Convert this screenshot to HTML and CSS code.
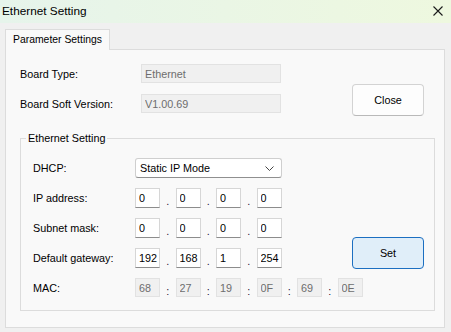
FILE: index.html
```html
<!DOCTYPE html>
<html>
<head>
    <link rel="stylesheet" href="styles.css">
</head>
<body>
<div class="window">
    <div class="titlebar">
        <span class="title">Ethernet Setting</span>
        <svg class="close-x" width="10" height="10" viewBox="0 0 10 10">
            <path d="M0.5 0.5 L9.5 9.5 M9.5 0.5 L0.5 9.5" stroke="#1a1a1a" stroke-width="1.1" fill="none"/>
        </svg>
    </div>

    <div class="tabs">
        <div class="tab">Parameter Settings</div>
    </div>

    <div class="panel">
        <div class="board">
            <div class="board-fields">
                <div class="board-row">
                    <span class="label">Board Type:</span>
                    <input class="box readonly board-input" type="text" value="Ethernet" readonly>
                </div>
                <div class="board-row">
                    <span class="label">Board Soft Version:</span>
                    <input class="box readonly board-input" type="text" value="V1.00.69" readonly>
                </div>
            </div>
            <button class="btn close-btn">Close</button>
        </div>

        <fieldset class="group">
            <legend>Ethernet Setting</legend>
            <div class="group-grid">
                <span class="label">DHCP:</span>
                <div class="select">
                    <span>Static IP Mode</span>
                    <svg width="9" height="5" viewBox="0 0 9 5">
                        <path d="M0.5 0.5 L4.5 4.5 L8.5 0.5" stroke="#444" stroke-width="1" fill="none"/>
                    </svg>
                </div>
                <span></span>

                <span class="label">IP address:</span>
                <div class="fields">
                    <input class="box" type="text" value="0"><span class="sep">.</span>
                    <input class="box" type="text" value="0"><span class="sep">.</span>
                    <input class="box" type="text" value="0"><span class="sep">.</span>
                    <input class="box" type="text" value="0">
                </div>
                <span></span>

                <span class="label">Subnet mask:</span>
                <div class="fields">
                    <input class="box" type="text" value="0"><span class="sep">.</span>
                    <input class="box" type="text" value="0"><span class="sep">.</span>
                    <input class="box" type="text" value="0"><span class="sep">.</span>
                    <input class="box" type="text" value="0">
                </div>
                <button class="btn set-btn">Set</button>

                <span class="label">Default gateway:</span>
                <div class="fields">
                    <input class="box" type="text" value="192"><span class="sep">.</span>
                    <input class="box" type="text" value="168"><span class="sep">.</span>
                    <input class="box" type="text" value="1"><span class="sep">.</span>
                    <input class="box" type="text" value="254">
                </div>

                <span class="label">MAC:</span>
                <div class="fields mac">
                    <input class="box readonly" type="text" value="68" readonly><span class="sep">:</span>
                    <input class="box readonly" type="text" value="27" readonly><span class="sep">:</span>
                    <input class="box readonly" type="text" value="19" readonly><span class="sep">:</span>
                    <input class="box readonly" type="text" value="0F" readonly><span class="sep">:</span>
                    <input class="box readonly" type="text" value="69" readonly><span class="sep">:</span>
                    <input class="box readonly" type="text" value="0E" readonly>
                </div>
            </div>
        </fieldset>
    </div>
</div>
</body>
</html>
```

FILE: styles.css
```css
body {
    margin: 0;
    padding: 0;
    background-color: #f0f0f0;
    font-family: "Liberation Sans", Arial, sans-serif;
    font-size: 10.8px;
    color: #000;
}

.window {
    width: 451px;
    height: 332px;
    overflow: hidden;
}

.titlebar {
    height: 23px;
    display: flex;
    align-items: center;
    justify-content: space-between;
    padding: 0 8px 0 2px;
    background: linear-gradient(to right, #e6f4eb, #eef8df);
}

.title {
    font-size: 11.8px;
    margin-top: -1px;
}

.close-x {
    margin-top: -2px;
}

.tabs {
    display: flex;
    padding: 6px 0 0 5px;
}

.tab {
    width: 96px;
    height: 20px;
    line-height: 19px;
    padding: 0 0 0 7px;
    background-color: #f9f9f9;
    border: 1px solid #dcdcdc;
    border-bottom: none;
    margin-bottom: -1px;
    position: relative;
    font-size: 10.4px;
}

.panel {
    margin-left: 5px;
    background-color: #f9f9f9;
    border: 1px solid #dcdcdc;
    padding: 14px 9px 0 14px;
    width: 415px;
    height: 263px;
}

.label {
    display: flex;
    align-items: center;
}

.board {
    display: flex;
    justify-content: space-between;
    padding-right: 11px;
}

.board-fields {
    display: flex;
    flex-direction: column;
    gap: 11px;
}

.board-row {
    display: grid;
    grid-template-columns: 121px 140px;
    height: 19px;
}

.box {
    box-sizing: border-box;
    height: 100%;
    margin: 0;
    padding: 0 0 0 3px;
    font-family: inherit;
    font-size: 10.8px;
    color: #000;
    background-color: #fff;
    border: 1px solid #d6d6d6;
    border-bottom-color: #8c8c8c;
    outline: none;
}

.box.readonly {
    background-color: #f0f0f0;
    border: 1px solid #e2e2e2;
    color: #6d6d6d;
}

.board-input {
    width: 140px;
}

.btn {
    box-sizing: border-box;
    width: 72px;
    height: 32px;
    font-family: inherit;
    font-size: 10.8px;
    color: #000;
    border-radius: 4px;
    padding: 0;
}

.close-btn {
    margin-top: 20px;
    background-color: #fdfdfd;
    border: 1px solid #d3d3d3;
    border-bottom-color: #b9b9b9;
}

.set-btn {
    grid-column: 3;
    grid-row: 3 / span 2;
    justify-self: end;
    align-self: end;
    margin-bottom: -1px;
    background-color: #e0eef9;
    border: 1.5px solid #1c6fc1;
}

.group {
    margin: 15px 0 0 0;
    padding: 13px 10px 12px 5px;
    border: 1px solid #dcdcdc;
    min-width: 0;
}

.group legend {
    padding: 0 2px;
    line-height: 14px;
}

.group-grid {
    margin-left: 7px;
    display: grid;
    grid-template-columns: 102px 147px 1fr;
    grid-auto-rows: 20px;
    row-gap: 10px;
}

.select {
    box-sizing: border-box;
    display: flex;
    align-items: center;
    justify-content: space-between;
    padding: 0 7px 0 4px;
    background-color: #fff;
    border: 1px solid #cfcfcf;
    border-bottom-color: #8f8f8f;
    border-radius: 3px;
}

.fields {
    display: flex;
    height: 20px;
}

.fields .box {
    width: 25px;
    height: 20px;
}

.fields.mac {
    grid-column: 2 / 4;
}

.fields.mac .box {
    height: 19px;
}

.sep {
    width: 15.5px;
    display: flex;
    align-items: flex-end;
    justify-content: center;
    color: #2a1a3a;
    padding-bottom: 1px;
    box-sizing: border-box;
}
```
